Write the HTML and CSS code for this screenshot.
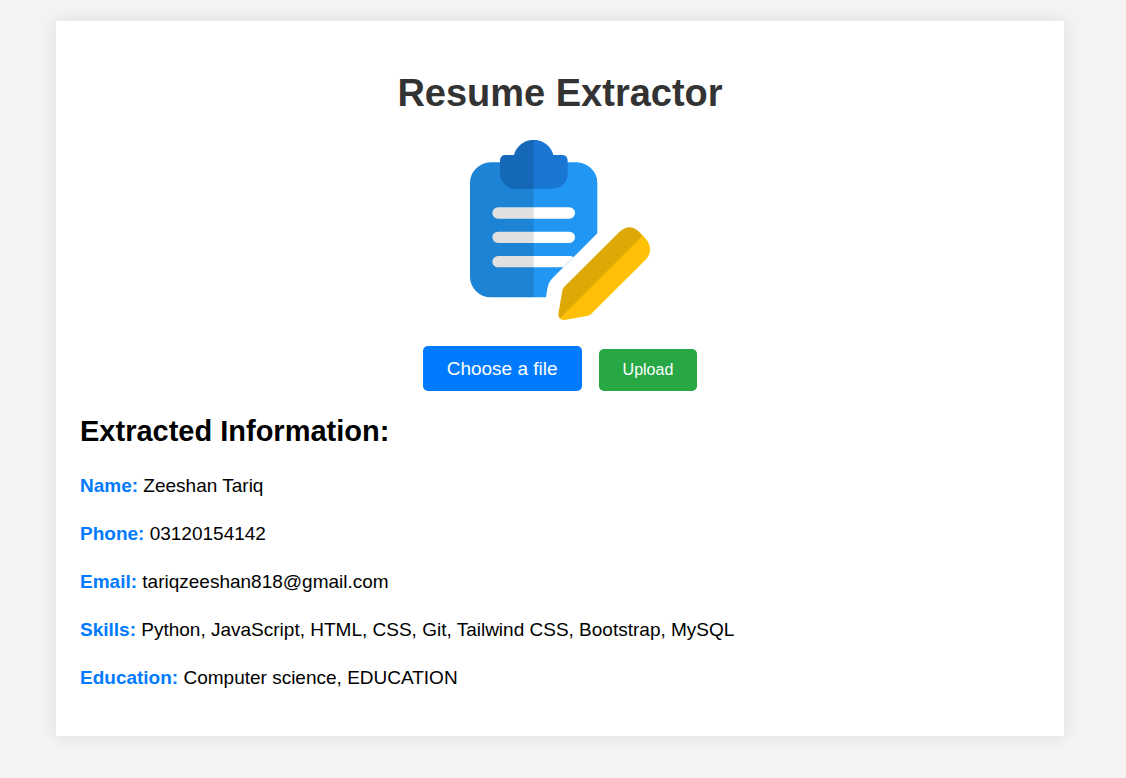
FILE: index.html
```html
<!DOCTYPE html>
<html lang="en">
<head>
<meta charset="utf-8">
<title>Resume Extractor</title>
<link rel="stylesheet" href="styles.css">
</head>
<body>
<main class="container">
  <h1 class="title">Resume Extractor</h1>
  <svg class="logo" viewBox="30 30 540 540" aria-hidden="true">
    <path fill="#2196f3" d="M92 97H350A62 62 0 0 1 412 159V310L280 442Q265 457 262 476L258 502H92A62 62 0 0 1 30 440V159A62 62 0 0 1 92 97Z"/>
    <path fill="#1976d2" d="M137 75H162A61 61 0 0 1 280 75H306Q323 75 323 92V132A44 44 0 0 1 279 176H164A44 44 0 0 1 120 132V92Q120 75 137 75Z"/>
    <path fill="#fff" d="M114 232H328A17 17 0 0 1 328 266H114A17 17 0 0 1 114 232ZM114 305H328A17 17 0 0 1 328 339H114A17 17 0 0 1 114 305ZM114 378H328Q335 378 341 381L310 412H114A17 17 0 0 1 114 378Z"/>
    <path fill="#000" fill-opacity=".12" d="M221 30V502H92A62 62 0 0 1 30 440V159A62 62 0 0 1 92 97H120V92Q120 75 137 75H162A61 61 0 0 1 221 30Z"/>
    <path fill="#ffc107" d="M307 482Q308 475 313 470L478 306Q508 278 538 306L555 323Q584 355 559 387L394 551Q390 555 384 557L314 570Q295 570 295 552Z"/>
    <path fill="#000" fill-opacity=".13" d="M307 482Q308 475 313 470L478 306Q508 278 538 306L547 318L300 565Q295 561 295 552Z"/>
  </svg>
  <form class="upload-form">
    <input class="file-input" type="file" id="resume">
    <label class="file-label" for="resume">Choose a file</label>
    <button class="upload-button" type="button">Upload</button>
  </form>
  <section class="results">
    <h2 class="subtitle">Extracted Information:</h2>
    <p class="entry"><strong class="key">Name:</strong> Zeeshan Tariq</p>
    <p class="entry"><strong class="key">Phone:</strong> 03120154142</p>
    <p class="entry"><strong class="key">Email:</strong> tariqzeeshan818@gmail.com</p>
    <p class="entry"><strong class="key">Skills:</strong> Python, JavaScript, HTML, CSS, Git, Tailwind CSS, Bootstrap, MySQL</p>
    <p class="entry"><strong class="key">Education:</strong> Computer science, EDUCATION</p>
  </section>
</main>
</body>
</html>
```
FILE: styles.css
```css
* {
  box-sizing: border-box;
}

body {
  margin: 0;
  padding: 21px 62px 42px 56px;
  background: #f4f4f4;
  color: #000;
  font-family: Arial, "Liberation Sans", sans-serif;
  font-size: 19px;
}

.container {
  padding: 50px 24px 44px;
  background: #fff;
  box-shadow: 0 0 20px rgba(0, 0, 0, 0.1);
}

.title {
  margin: 0 0 25px;
  color: #333;
  font-size: 38px;
  line-height: 44px;
  text-align: center;
}

.logo {
  display: block;
  width: 180px;
  height: 180px;
  margin: 0 auto 26px;
}

.upload-form {
  display: flex;
  justify-content: center;
  align-items: flex-end;
  gap: 17px;
}

.file-input {
  position: absolute;
  width: 1px;
  height: 1px;
  opacity: 0;
}

.file-label,
.upload-button {
  padding: 12px 24px;
  border: 0;
  border-radius: 5px;
  color: #fff;
  font-family: inherit;
  cursor: pointer;
}

.file-label {
  background: #007bff;
  line-height: 21px;
}

.upload-button {
  background: #28a745;
  font-size: 16px;
  line-height: 18px;
}

.subtitle {
  margin: 24px 0;
  font-size: 29px;
  line-height: 32px;
}

.entry {
  margin: 0 0 19px;
  line-height: 29px;
}

.entry:last-child {
  margin-bottom: 0;
}

.key {
  color: #007bff;
}
```
